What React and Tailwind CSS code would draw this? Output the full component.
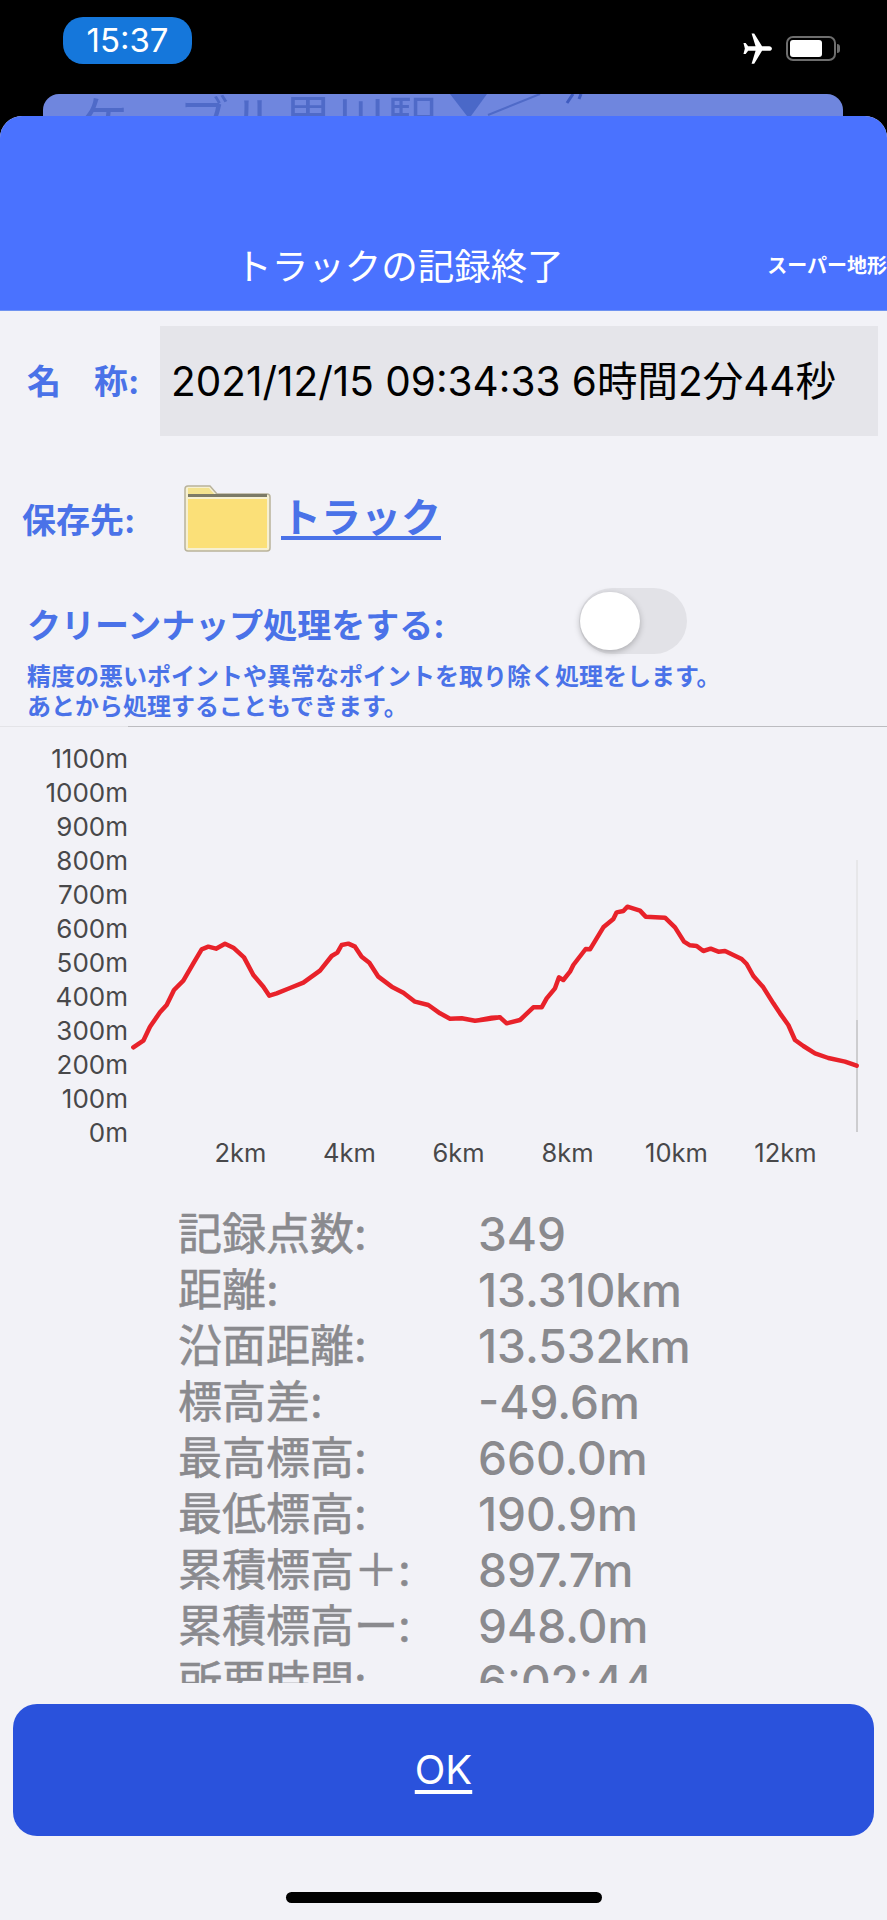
const font = { fontFamily: 'Inter, "Noto Sans CJK JP", sans-serif' }

const yLabels = ['1100m', '1000m', '900m', '800m', '700m', '600m', '500m', '400m', '300m', '200m', '100m', '0m']
const xLabels = ['2km', '4km', '6km', '8km', '10km', '12km']
const stats = [
  ['記録点数:', '349'],
  ['距離:', '13.310km'],
  ['沿面距離:', '13.532km'],
  ['標高差:', '-49.6m'],
  ['最高標高:', '660.0m'],
  ['最低標高:', '190.9m'],
  ['累積標高＋:', '897.7m'],
  ['累積標高ー:', '948.0m'],
  ['所要時間:', '6:02:44'],
]

// elevation line, traced in two halves at 3x
const leftHalf = [
  [100, 592], [130, 572], [150, 530], [180, 487], [200, 465], [222, 420], [250, 392], [280, 340], [305, 298], [325, 290],
  [348, 296], [375, 281], [400, 293], [432, 322], [460, 375], [490, 410], [508, 437], [530, 430], [570, 414], [610, 398],
  [660, 362], [695, 318], [712, 308], [725, 285], [745, 281], [765, 290], [785, 320], [808, 338], [835, 380], [875, 410],
  [910, 428], [945, 455], [985, 465], [1020, 490], [1050, 506], [1085, 505], [1125, 512], [1160, 508], [1200, 502],
]
const rightHalf = [
  [0, 510], [35, 503], [60, 502], [80, 520], [120, 510], [160, 472], [185, 472], [200, 445], [225, 415], [237, 382],
  [250, 390], [270, 365], [280, 345], [317, 297], [330, 298], [370, 232], [400, 207], [410, 187], [430, 183], [442, 170],
  [480, 182], [497, 200], [555, 203], [585, 232], [612, 275], [630, 286], [650, 288], [670, 303], [692, 296], [715, 305],
  [735, 303], [785, 327], [800, 342], [820, 378], [850, 412], [880, 460], [900, 490], [925, 525], [945, 570], [970, 588],
  [1005, 610], [1045, 624], [1095, 635], [1130, 647],
]
const points = [
  ...leftHalf.map(p => `${100 + p[0] / 3},${850 + p[1] / 3}`),
  ...rightHalf.map(p => `${480 + p[0] / 3},${850 + p[1] / 3}`),
].join(' ')

function Chart() {
  return (
    <div className="relative h-[464px] w-full">
      <svg className="absolute left-0 top-0" width="887" height="464" viewBox="0 727 887 464">
        <line x1="857" y1="860" x2="857" y2="1020" stroke="#dcdcdc" strokeWidth="1" />
        <line x1="857" y1="1020" x2="857" y2="1132" stroke="#a8a8a8" strokeWidth="1" />
        <polyline points={points} fill="none" stroke="#e8222a" strokeWidth="4.5" strokeLinejoin="round" strokeLinecap="round" />
      </svg>
      <div className="absolute left-0 top-[15px] flex w-[128px] flex-col items-end text-[26px] leading-[34px] text-[#48484a]">
        {yLabels.map(l => <div key={l}>{l}</div>)}
      </div>
      <div className="absolute left-[186px] top-[409px] flex text-[25.5px] leading-[34px] text-[#48484a]">
        {xLabels.map(l => <div key={l} className="w-[109px] text-center">{l}</div>)}
      </div>
    </div>
  )
}

export default function App() {
  return (
    <div style={font} className="relative h-[1920px] w-[887px] overflow-hidden bg-black">
      {/* status bar */}
      <div className="flex h-[94px] items-start justify-between pl-[63px] pr-[47px] pt-[17px]">
        <div className="flex h-[47px] w-[129px] items-center justify-center rounded-[20px] bg-[#1577db] text-[33px] text-white">15:37</div>
        <div className="mt-[15px] flex items-center gap-[10px]">
          <svg width="37" height="33" viewBox="0 0 24 24" fill="#fff">
            <path d="M22.5 12c0-1-.9-1.700-2-1.700h-5.200L9.600 1H7.700l2.900 9.300H5.200L3.400 8H1.800l1 4-1 4h1.600l1.800-2.300h5.400L7.700 23h1.900l5.700-9.300h5.200c1.100 0 2-.7 2-1.700z" />
          </svg>
          <div className="flex items-center">
            <div className="h-[25px] w-[50px] rounded-[7px] border-2 border-[#6e6e6e] p-[2px]">
              <div className="h-full w-[32px] rounded-[3px] bg-white" />
            </div>
            <div className="ml-[1px] h-[9px] w-[3px] rounded-r-sm bg-[#6e6e6e]" />
          </div>
        </div>
      </div>

      {/* sheet behind, map label showing through */}
      <div className="absolute left-[43px] top-[94px] h-[60px] w-[800px] overflow-hidden rounded-t-[16px] bg-[#6f86de]">
        <div className="absolute left-[35px] top-[1px] whitespace-nowrap text-[50px] tracking-[2px] leading-[50px] text-[#4f6ac8]">ケーブル黒川駅</div>
        <svg className="absolute left-0 top-0" width="800" height="22" viewBox="0 0 800 22">
          <path d="M407 0 L444 0 L428 22 L424 22 Z" fill="#4a68c8" />
          <path d="M445 21 L497 0" stroke="#4f6ac8" strokeWidth="2" />
          <path d="M524 9 L530 0 M538 0 L536 5" stroke="#3f5cc0" strokeWidth="3" fill="none" />
        </svg>
      </div>

      {/* sheet */}
      <div className="absolute left-0 top-[116px] flex h-[1804px] w-[887px] flex-col overflow-hidden rounded-t-[22px] bg-[#f2f2f7]">
        <div className="relative flex h-[195px] shrink-0 items-end justify-center border-b border-[#6f93f0] bg-[#4a72ff] pb-[18px]">
          <div className="mr-[88px] text-[36.5px] leading-[50px] text-white">トラックの記録終了</div>
          <div className="absolute right-0 bottom-[29px] text-[20px] font-bold text-white">スーパー地形</div>
        </div>

        <div className="mt-[15px] flex h-[110px] shrink-0 items-center pl-[27px] pr-[9px] text-[#4a72e8]">
          <div className="flex w-[133px] gap-[33px] text-[34px] font-bold">
            <span>名</span><span>称:</span>
          </div>
          <div className="flex h-full flex-1 items-center whitespace-nowrap bg-[#e5e5ea] pl-[11px] pt-[3px] text-[40.5px] text-black">2021/12/15 09:34:33 6時間2分44秒</div>
        </div>

        <div className="mt-[48px] flex h-[68px] shrink-0 items-center pl-[22px]">
          <div className="w-[162px] pt-[5px] text-[34px] font-bold text-[#4a72e8]">保存先:</div>
          <svg width="87" height="68" viewBox="0 0 87 68">
            <path d="M1 5 a3 3 0 0 1 3-3 h22 l7 8 h50 a3 3 0 0 1 3 3 v51 a3 3 0 0 1-3 3 H4 a3 3 0 0 1-3-3z" fill="#f6f0d2" stroke="#b9b39b" strokeWidth="1.500" />
            <path d="M4 4 h21 l6 7 H4z" fill="#f3e28e" />
            <rect x="4" y="10" width="79" height="3" fill="#7c7a66" />
            <rect x="4" y="15" width="79" height="49" fill="#fbe078" />
          </svg>
          <div className="ml-[10px] text-[40px] font-bold text-[#4a72e8] underline underline-offset-[4px]">トラック</div>
        </div>

        <div className="mt-[36px] flex h-[66px] shrink-0 items-center pl-[27px]">
          <div className="w-[552px] pt-[8px] text-[34px] font-bold text-[#4a72e8]">クリーンナップ処理をする:</div>
          <div className="relative h-[66px] w-[108px] rounded-full bg-[#e2e2e7]">
            <div className="absolute left-[1px] top-[4px] h-[58px] w-[60px] rounded-full bg-white shadow-[0_2px_6px_rgba(0,0,0,0.25)]" />
          </div>
        </div>

        <div className="mt-[8px] shrink-0 pl-[27px] text-[24px] leading-[30px] font-bold text-[#4a72e8]">
          <div>精度の悪いポイントや異常なポイントを取り除く処理をします。</div>
          <div>あとから処理することもできます。</div>
        </div>

        <div className="mt-[4px] flex h-[1px] shrink-0">
          <div className="w-[128px] bg-[#e4e4e8]" />
          <div className="flex-1 bg-[#bcbcc0]" />
        </div>
        <Chart />

        <div className="mt-[15px] h-[477px] shrink-0 overflow-hidden pl-[178px] text-[#8a8a8e]">
          {stats.map(([k, v]) => (
            <div key={k} className="flex h-[56px] items-center whitespace-nowrap">
              <div className="w-[300px] text-[44px] leading-[56px] [-webkit-text-stroke:0.6px_#8a8a8e]">{k}</div>
              <div className="text-[46px] leading-[56px] font-medium">{v}</div>
            </div>
          ))}
        </div>

        <div className="mx-[13px] mt-[21px] flex h-[132px] shrink-0 items-center justify-center rounded-[24px] bg-[#2a52dc] text-[40px] text-white underline underline-offset-[6px]">OK</div>

        <div className="mx-auto mt-[56px] h-[11px] w-[316px] shrink-0 rounded-full bg-black" />
      </div>
    </div>
  )
}
